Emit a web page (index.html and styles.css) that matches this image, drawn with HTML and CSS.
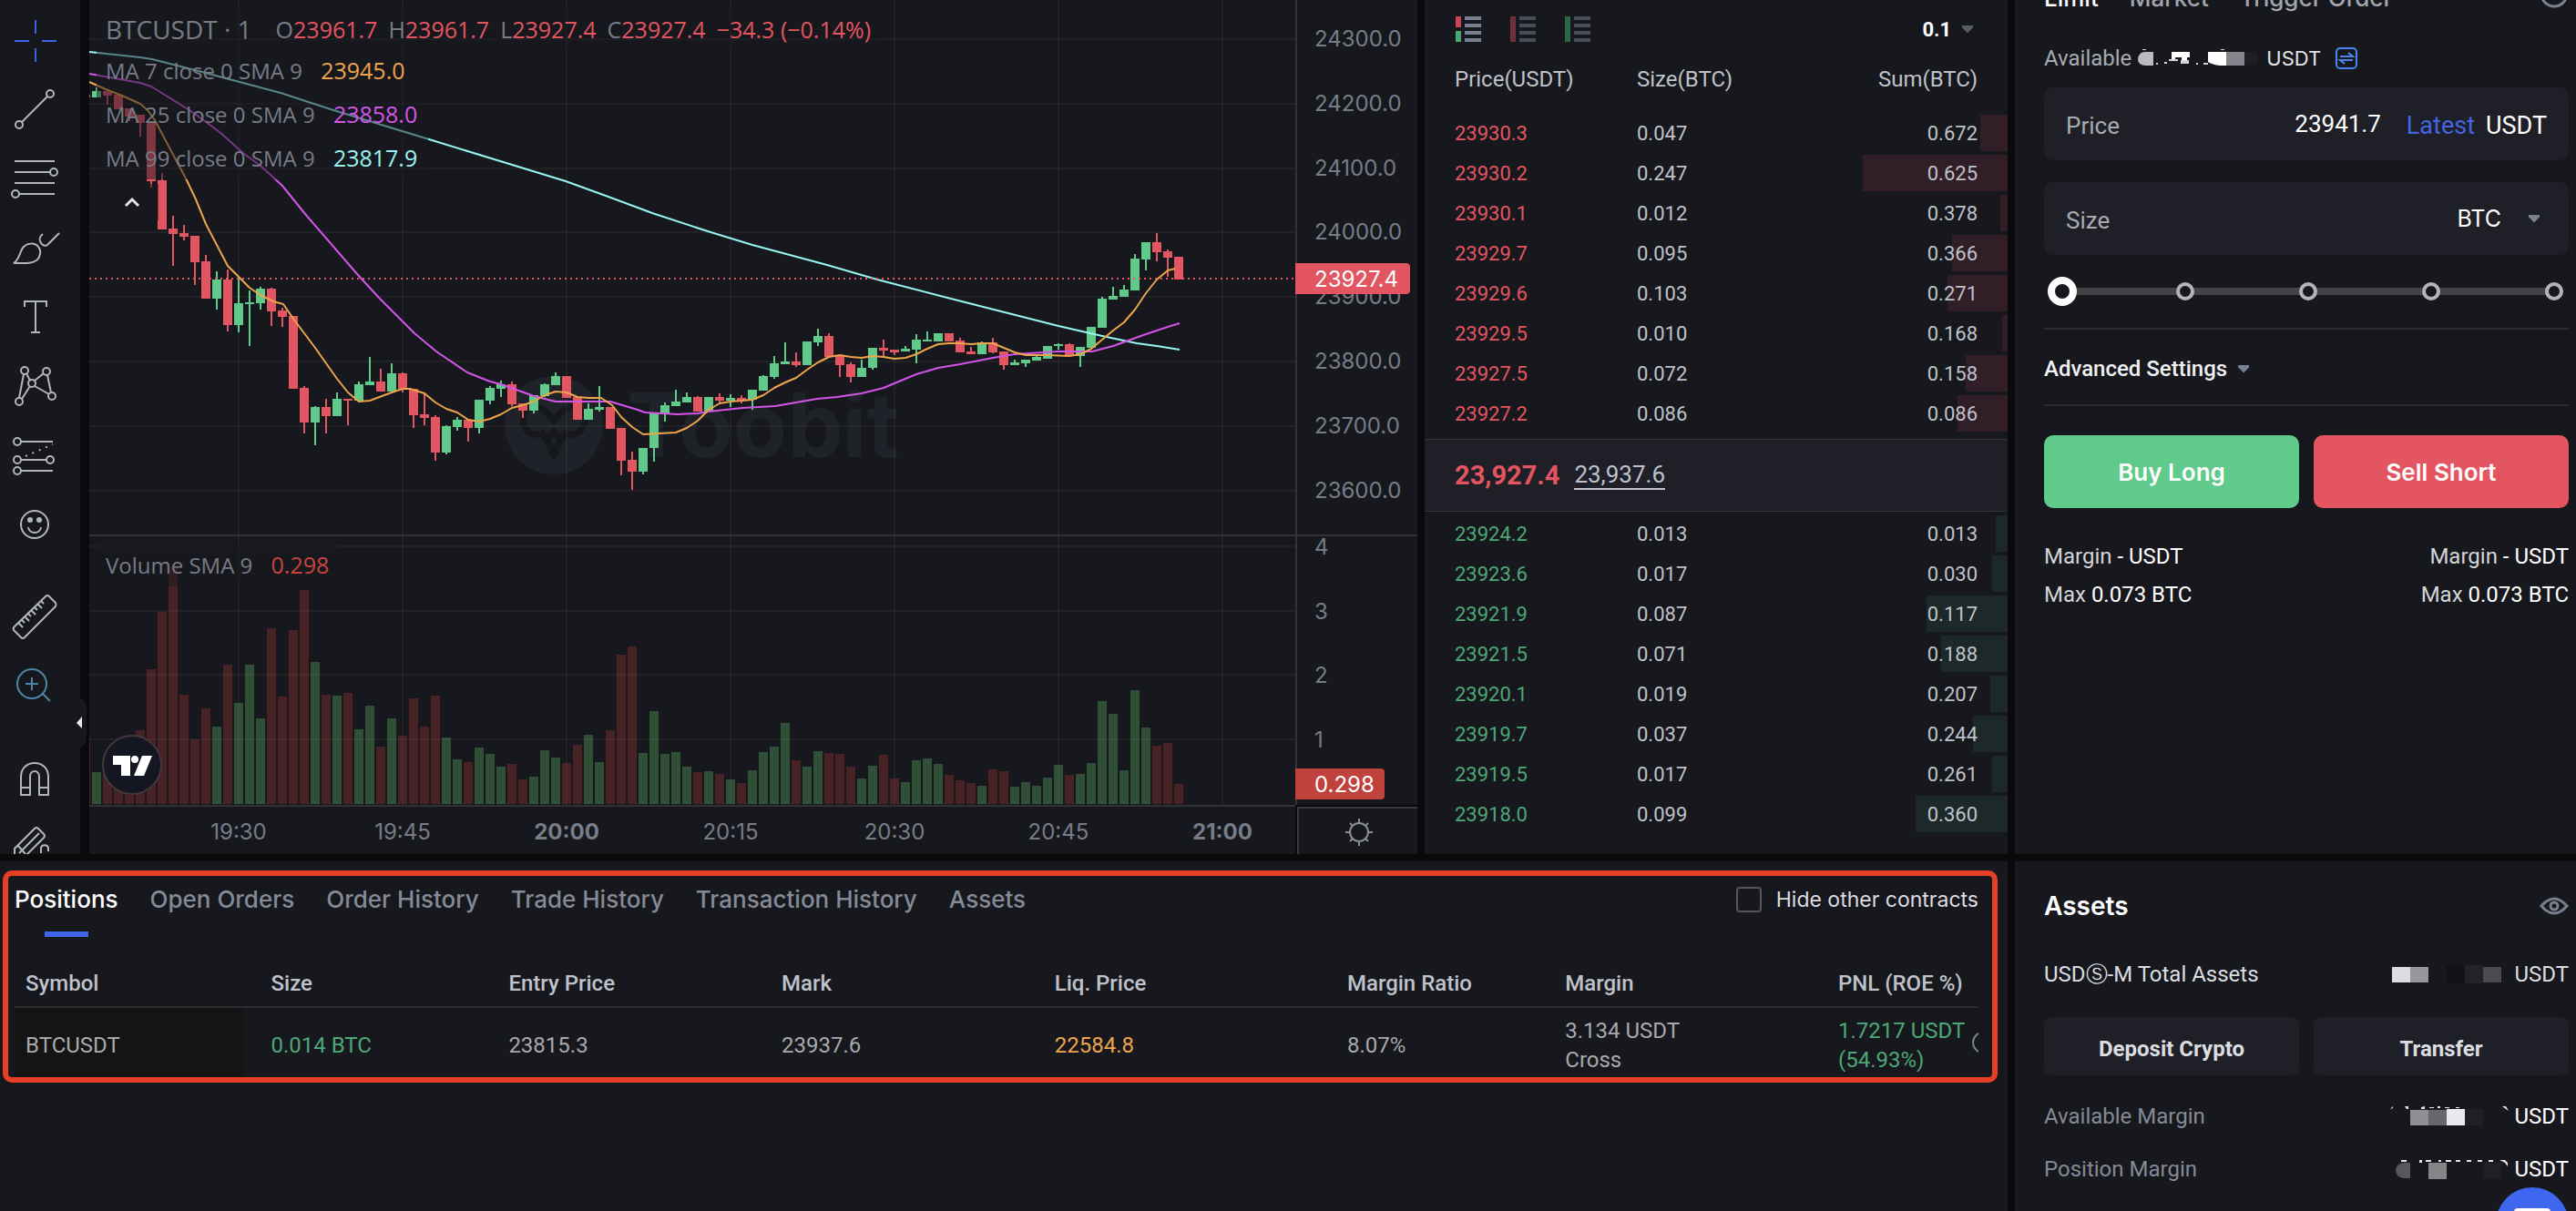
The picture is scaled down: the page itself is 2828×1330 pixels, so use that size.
FILE: index.html
```html
<!DOCTYPE html>
<html lang="en">
<head>
    <meta charset="UTF-8">
    <title>BTCUSDT</title>
    <link rel="stylesheet" href="styles.css">
</head>
<body>
<div class="page">
    <div class="toolbar">
        <div class="tool-group">
            <button class="tool active" aria-label="Cross"><svg viewBox="0 0 56 56"><path d="M23 5v15M23 36v15M0 28h16M30 28h16"/></svg></button>
            <button class="tool" aria-label="Trend line"><svg viewBox="0 0 56 56"><circle cx="39" cy="10" r="4"/><circle cx="5" cy="44" r="4"/><path d="M36 13L8 41"/></svg></button>
            <button class="tool" aria-label="Fib retracement"><svg viewBox="0 0 56 56"><path d="M0 8h44M0 20h39M0 32h44M5 44h39"/><circle cx="43" cy="20" r="4"/><circle cx="1" cy="44" r="4"/></svg></button>
            <button class="tool" aria-label="Brush"><svg viewBox="0 0 56 56"><path d="M-1 44C5 41 6 30 10 26C14 22 22 21 26 26C30 31 28 38 24 41C21 43 18 44 14 44zM31 12C27 15 27 19 29 22C31 25 35 26 37 23L49 11"/></svg></button>
            <button class="tool" aria-label="Text"><svg viewBox="0 0 56 56"><path d="M11 16V10H35V16M23 10V44M18 44H28"/></svg></button>
            <button class="tool" aria-label="Patterns"><svg viewBox="0 0 56 56"><path d="M5 40L10 14M13 13L17 21M22 21L32 13M36 15L40 34M38 36L22 27M17 27L8 41"/><circle cx="11" cy="10" r="4"/><circle cx="35" cy="11" r="4"/><circle cx="19" cy="24" r="4"/><circle cx="41" cy="38" r="4"/><circle cx="5" cy="44" r="4"/></svg></button>
            <button class="tool" aria-label="Forecast"><svg viewBox="0 0 56 56"><path d="M7 12H42M7 32H35M7 44H42"/><path d="M12 28L42 15" stroke-dasharray="2 6"/><circle cx="3" cy="12" r="4"/><circle cx="3" cy="32" r="4"/><circle cx="39" cy="32" r="4"/><circle cx="3" cy="44" r="4"/></svg></button>
            <button class="tool" aria-label="Icons"><svg viewBox="0 0 56 56"><circle cx="22" cy="27" r="15"/><path d="M15 30C16 38 28 38 29 30"/><circle class="dot" cx="17" cy="22" r="2"/><circle class="dot" cx="27" cy="22" r="2"/></svg></button>
        </div>
        <div class="tool-group">
            <button class="tool" aria-label="Measure"><svg viewBox="0 0 56 56"><path d="M34 6Q36 4 38 6L45 13Q46 15 45 17L11 51Q9 53 7 51L-1 43Q-2 41 0 39zM4 35l5 5M11 28l5 5M18 21l5 5M25 14l5 5M8 32l3 3M15 25l3 3M22 18l3 3M29 11l3 3"/></svg></button>
            <button class="tool zoom" aria-label="Zoom in"><svg viewBox="0 0 56 56"><circle cx="19" cy="26" r="16"/><path d="M12 26H26M19 19V33M31 37L39 45"/></svg></button>
        </div>
        <div class="tool-group">
            <button class="tool" aria-label="Magnet"><svg viewBox="0 0 56 56"><path d="M7 48V28C7 8 37 8 37 28V48H27V28C27 20 17 20 17 28V48zM7 40H17M27 40H37"/></svg></button>
            <button class="tool" aria-label="Drawing mode"><svg viewBox="0 0 56 56"><path d="M0 38V31L22 9Q24 7 26 9L32 15Q34 17 32 19L10 41M5 36L27 14M4 28L12 37M29 36V31C29 26 37 26 37 31V34"/></svg></button>
        </div>
    </div>
    <button class="toolbar-toggle" aria-label="Hide toolbar"><svg viewBox="0 0 12 54"><path class="tab" d="M4 0Q11 2 11 10V44Q11 52 4 54z"/><path d="M6 20V33L0 27z" fill="#e8eaee"/></svg></button>

    <div class="chart">
        <svg id="chart" viewBox="0 0 1458 938"></svg>
        <div class="legend">
            <div class="legend-row symbol"><span class="name">BTCUSDT <i>·</i> 1</span>
                <span>O<b>23961.7</b></span><span>H<b>23961.7</b></span><span>L<b>23927.4</b></span><span>C<b>23927.4</b></span><b>−34.3 (−0.14%)</b></div>
            <div class="legend-row">MA 7 close 0 SMA 9 <span class="orange">23945.0</span></div>
            <div class="legend-row">MA 25 close 0 SMA 9 <span class="magenta">23858.0</span></div>
            <div class="legend-row">MA 99 close 0 SMA 9 <span class="cyan">23817.9</span></div>
            <button class="legend-toggle" aria-label="Hide indicators"><svg viewBox="0 0 18 12"><path d="M2 10L9 3L16 10"/></svg></button>
        </div>
        <div class="legend volume">
            <div class="legend-row">Volume SMA 9 <span class="dark-red">0.298</span></div>
        </div>
        <a class="tv" href="#" aria-label="TradingView"><svg viewBox="0 0 66 66"><circle cx="33" cy="33" r="32"/><path d="M12 23H31V45H21V33H12z"/><circle class="mark" cx="36" cy="27" r="4"/><path d="M44 23H55L46 45H35z"/></svg></a>
    </div>

    <div class="book">
        <div class="book-bar">
            <div class="book-modes">
                <button aria-label="Both sides"><svg viewBox="0 0 28 28"><path fill="#c94456" d="M0 0h6v12H0z"/><path fill="#46a873" d="M0 16h6v12H0z"/><path fill="#77818f" d="M10 0h18v4H10zM10 8h18v4H10zM10 16h18v4H10zM10 24h18v4H10z"/></svg></button>
                <button aria-label="Asks"><svg viewBox="0 0 28 28"><path fill="#70303c" d="M0 0h6v28H0z"/><path fill="#474d56" d="M10 0h18v4H10zM10 8h18v4H10zM10 16h18v4H10zM10 24h18v4H10z"/></svg></button>
                <button aria-label="Bids"><svg viewBox="0 0 28 28"><path fill="#2f6649" d="M0 0h6v28H0z"/><path fill="#474d56" d="M10 0h18v4H10zM10 8h18v4H10zM10 16h18v4H10zM10 24h18v4H10z"/></svg></button>
            </div>
            <button class="step">0.1 <span class="caret dim"></span></button>
        </div>
        <table class="asks">
            <thead><tr><th>Price(USDT)</th><th>Size(BTC)</th><th>Sum(BTC)</th></tr></thead>
            <tbody>
            <tr style="--depth: 4.7%"><td>23930.3</td><td>0.047</td><td>0.672</td></tr>
            <tr style="--depth: 24.8%"><td>23930.2</td><td>0.247</td><td>0.625</td></tr>
            <tr style="--depth: 1.2%"><td>23930.1</td><td>0.012</td><td>0.378</td></tr>
            <tr style="--depth: 9.5%"><td>23929.7</td><td>0.095</td><td>0.366</td></tr>
            <tr style="--depth: 10.3%"><td>23929.6</td><td>0.103</td><td>0.271</td></tr>
            <tr style="--depth: 1%"><td>23929.5</td><td>0.010</td><td>0.168</td></tr>
            <tr style="--depth: 7.2%"><td>23927.5</td><td>0.072</td><td>0.158</td></tr>
            <tr style="--depth: 8.6%"><td>23927.2</td><td>0.086</td><td>0.086</td></tr>
            </tbody>
        </table>
        <div class="last"><strong>23,927.4</strong><span>23,937.6</span></div>
        <table class="bids">
            <tbody>
            <tr style="--depth: 2%"><td>23924.2</td><td>0.013</td><td>0.013</td></tr>
            <tr style="--depth: 2.6%"><td>23923.6</td><td>0.017</td><td>0.030</td></tr>
            <tr style="--depth: 13.9%"><td>23921.9</td><td>0.087</td><td>0.117</td></tr>
            <tr style="--depth: 11.4%"><td>23921.5</td><td>0.071</td><td>0.188</td></tr>
            <tr style="--depth: 3%"><td>23920.1</td><td>0.019</td><td>0.207</td></tr>
            <tr style="--depth: 5.9%"><td>23919.7</td><td>0.037</td><td>0.244</td></tr>
            <tr style="--depth: 2.6%"><td>23919.5</td><td>0.017</td><td>0.261</td></tr>
            <tr style="--depth: 15.8%"><td>23918.0</td><td>0.099</td><td>0.360</td></tr>
            </tbody>
        </table>
    </div>

    <div class="order">
        <div class="order-tabs">
            <button class="current">Limit</button>
            <button>Market</button>
            <button>Trigger Order</button>
            <svg class="info" viewBox="0 0 32 32"><circle cx="16" cy="16" r="14"/><path d="M16 16v7M16 9v3"/></svg>
        </div>
        <div class="available">
            <span>Available</span>
            <svg class="mosaic" viewBox="0 0 134 20"><path fill="#bbbbbf" d="M17 3V18H8Q0 17 0 11Q1 3 8 3z"/><path fill="#fff" d="M37 3H57V9H54V12H48V9H41V12H37zM77 3H97V18H90Q82 17 77 14z"/><path fill="#85848c" d="M97 3H117V18H97z"/><path fill="#d5d5d8" d="M20 15h2v2h-2zM29 14h3v2h-3zM34 11h10v2H34zM47 12h9v4h-9zM64 15h2v2h-2zM72 15h5v2h-5zM5 0h4v1H5zM91 0h4v1h-4z"/><path fill="#1f1f25" d="M117 3H130Q134 10 130 16L117 18z"/></svg>
            <span class="unit">USDT</span>
            <button class="swap" aria-label="Transfer"><svg viewBox="0 0 24 24"><rect x="1" y="1" width="22" height="22" rx="4"/><path d="M5 10H19L14 6M19 14H5L10 18"/></svg></button>
        </div>
        <div class="field">
            <label for="price">Price</label>
            <input id="price" type="text" value="23941.7">
            <button class="latest">Latest</button>
            <span class="unit">USDT</span>
        </div>
        <div class="field">
            <label for="size">Size</label>
            <input id="size" type="text" value="">
            <select aria-label="Size unit"><option>BTC</option><option>USDT</option></select>
            <span class="caret"></span>
        </div>
        <div class="slider">
            <div class="marks"><i></i><i></i><i></i><i></i><i></i></div>
            <input type="range" min="0" max="100" value="0" step="1" aria-label="Order size percent">
        </div>
        <button class="advanced">Advanced Settings <span class="caret"></span></button>
        <div class="pair">
            <button class="buy">Buy Long</button>
            <button class="sell">Sell Short</button>
        </div>
        <div class="margins">
            <p>Margin <span>- USDT</span></p><p>Margin <span>- USDT</span></p>
            <p>Max <span>0.073 BTC</span></p><p>Max <span>0.073 BTC</span></p>
        </div>
    </div>

    <div class="positions">
        <div class="frame">
            <div class="frame-head">
                <a class="current" href="#">Positions</a>
                <a href="#">Open Orders</a>
                <a href="#">Order History</a>
                <a href="#">Trade History</a>
                <a href="#">Transaction History</a>
                <a href="#">Assets</a>
                <label class="hide-other"><input type="checkbox"> Hide other contracts</label>
            </div>
            <table>
                <colgroup><col class="c-symbol"><col class="c-size"><col class="c-entry"><col class="c-mark"><col class="c-liq"><col class="c-ratio"><col class="c-margin"><col class="c-pnl"></colgroup>
                <thead>
                <tr><th>Symbol</th><th>Size</th><th>Entry Price</th><th>Mark</th><th>Liq. Price</th><th>Margin Ratio</th><th>Margin</th><th>PNL (ROE %)</th></tr>
                </thead>
                <tbody>
                <tr>
                    <td>BTCUSDT</td>
                    <td class="green">0.014 BTC</td>
                    <td>23815.3</td>
                    <td>23937.6</td>
                    <td class="orange">22584.8</td>
                    <td>8.07%</td>
                    <td>3.134 USDT<br>Cross</td>
                    <td class="green">1.7217 USDT<br>(54.93%)<svg class="share" viewBox="0 0 7 24"><circle cx="12" cy="12" r="11"/></svg></td>
                </tr>
                </tbody>
            </table>
        </div>
    </div>

    <div class="assets">
        <div class="assets-head">
            <h2>Assets</h2>
            <button aria-label="Hide balances"><svg viewBox="0 0 32 20"><path d="M2 10Q9 2 16 2T30 10Q23 18 16 18T2 10z"/><circle cx="16" cy="10" r="4"/></svg></button>
        </div>
        <div class="total">
            <span>USDⓈ-M Total Assets</span>
            <svg class="mosaic" viewBox="0 0 134 20"><path fill="#dcdde2" d="M4 2h20v17H4z"/><path fill="#97979b" d="M24 2h20v17H24z"/><path fill="#131317" d="M63 0h21v20H63z"/><path fill="#232327" d="M84 0h20v20H84z"/><path fill="#4a4a4f" d="M104 2h20v17h-20z"/></svg>
            <span>USDT</span>
        </div>
        <div class="pair">
            <button>Deposit Crypto</button>
            <button>Transfer</button>
        </div>
        <div class="balance">
            <span>Available Margin</span>
            <svg class="mosaic" viewBox="0 0 134 20"><path fill="#909094" d="M24 3h20v17H24z"/><path fill="#68676f" d="M44 3h20v17H44z"/><path fill="#e9eaef" d="M64 2h20v18H64z"/><path fill="#1f1f26" d="M84 2h20v18H84z"/><path fill="#e4e4e7" d="M2 2l3-3v2zM18 -1h4v3h-2zM36 0l4-1v3h-4zM45 0h5v1h-5zM54 -1h3v2h-3zM62 0h5v1h-5zM74 0h4v1h-4zM125 -1h4l3 5-3-2z"/></svg>
            <span class="unit">USDT</span>
        </div>
        <div class="balance">
            <span>Position Margin</span>
            <svg class="mosaic" viewBox="0 0 134 20"><path fill="#57575c" d="M24 3V20H16Q8 18 8 11Q9 4 16 3z"/><path fill="#858588" d="M44 3h20v18H44z"/><path fill="#1f1f26" d="M104 3h20v17h-20z"/><path fill="#e4e4e7" d="M14 0h6v2h-6zM34 0h3v3h-3zM41 0h6v2h-6zM55 0h3v2h-3zM63 0h6v2h-6zM74 0h5v2h-5zM86 0h5v2h-5zM98 0h5v2h-5zM110 0h5v2h-5zM122 0h6l3 3v4l-3-4z"/></svg>
            <span class="unit">USDT</span>
        </div>
    </div>
</div>
<button class="chat" aria-label="Chat"><svg viewBox="0 0 40 34"><rect width="40" height="28" rx="4"/></svg></button>
<script src="chart.js"></script>
</body>
</html>
```

FILE: styles.css
```css
* {
    margin: 0;
    padding: 0;
    box-sizing: border-box;
}

body {
    background: #0a0a0a;
    color: #bfc2ca;
    font-family: Roboto, "Liberation Sans", sans-serif;
    font-size: 24px;
    overflow: hidden;
}

button, input, select {
    font: inherit;
    color: inherit;
    background: none;
    border: none;
    outline: none;
}

button {
    cursor: pointer;
}

a {
    color: inherit;
    text-decoration: none;
}

svg {
    display: block;
    fill: none;
    overflow: visible;
}

table {
    width: 100%;
    border-collapse: collapse;
    table-layout: fixed;
    text-align: left;
}

.page {
    position: relative;
    min-height: 100vh;
    display: grid;
    grid-template-columns: 90px minmax(0, 1fr) 640px 616px;
    grid-template-rows: auto 1fr;
    gap: 8px;
}

.page > div {
    background: #17181d;
}

.green {
    color: #4da777;
}

.orange {
    color: #eda54b;
}

.magenta {
    color: #d354e8;
}

.cyan {
    color: #97f5f2;
}

.dark-red {
    color: #c8453f;
}

.caret {
    display: inline-block;
    width: 12px;
    height: 9px;
    background: #77818f;
    clip-path: polygon(0 0, 100% 0, 100% 30%, 50% 100%, 0 30%);
}

.caret.dim {
    background: #565b65;
}

/* toolbar */
.toolbar {
    height: 0;
    min-height: 100%;
    overflow: hidden;
    padding-top: 7px;
    border-right: 2px solid #0a0a0a;
}

.tool-group {
    margin-bottom: 24px;
}

.tool {
    display: block;
    width: 88px;
    height: 76px;
    padding: 10px 16px;
}

.tool svg {
    width: 56px;
    height: 56px;
    stroke: #b3b6bd;
    stroke-width: 2;
}

.tool .dot {
    fill: #b3b6bd;
}

.tool.active svg {
    stroke: #3f63e6;
}

.tool.zoom svg {
    stroke: #4f86a8;
}

.toolbar-toggle {
    position: absolute;
    left: 84px;
    top: 767px;
    width: 12px;
    height: 54px;
}

.toolbar-toggle .tab {
    fill: #17181d;
}

/* chart */
.chart {
    position: relative;
    font-family: Inter, sans-serif;
}

.chart text {
    font-size: 24px;
    fill: #777c87;
}

.legend {
    position: absolute;
    left: 8px;
    top: 8px;
    color: #777c88;
    font-family: "Open Sans", sans-serif;
}

.legend.volume {
    top: 596px;
}

.legend-row {
    width: fit-content;
    height: 48px;
    line-height: 48px;
    padding: 0 12px 0 10px;
    background: rgba(23, 24, 29, .5);
    white-space: nowrap;
}

.legend-row span {
    margin-left: 14px;
    font-size: 25px;
}

.legend-row b {
    font-weight: normal;
    color: #e35561;
}

.legend-row.symbol {
    display: flex;
    gap: 12px;
    height: 45px;
    font-size: 25px;
}

.symbol span {
    margin: 0;
}

.symbol .name {
    margin-right: 14px;
    font-size: 28px;
}

.symbol i {
    font-style: normal;
}

.legend-toggle {
    width: 58px;
    height: 40px;
    margin: 5px 10px;
    padding: 14px 20px;
    background: rgba(23, 24, 29, .5);
}

.legend-toggle svg {
    width: 18px;
    height: 12px;
    stroke: #e3e4e8;
    stroke-width: 3;
}

.tv {
    position: absolute;
    left: 14px;
    top: 807px;
    width: 66px;
}

.tv svg {
    fill: #fff;
}

.tv circle {
    fill: #141722;
    stroke: #43383e;
    stroke-width: 2;
}

.tv .mark {
    fill: #fff;
    stroke: none;
}

/* order book */
.book {
    font-size: 22px;
    padding-bottom: 22px;
}

.book-bar {
    display: flex;
    justify-content: space-between;
    align-items: center;
    height: 64px;
    padding: 0 38px 0 34px;
}

.book-modes {
    display: flex;
    gap: 32px;
}

.book-modes svg {
    width: 28px;
    height: 28px;
}

.step {
    display: flex;
    align-items: center;
    gap: 12px;
    color: #fff;
    font-weight: bold;
}

.book th {
    height: 60px;
    padding-bottom: 14px;
    font-weight: normal;
    font-size: 24px;
}

.book td {
    height: 44px;
}

.book th:first-child, .book td:first-child {
    width: 233px;
    padding-left: 33px;
}

.book th:last-child, .book td:last-child {
    padding-right: 33px;
    text-align: right;
}

.book tbody tr {
    background-repeat: no-repeat;
    background-position: right center;
    background-size: var(--depth) 40px;
}

.asks tbody tr {
    background-image: linear-gradient(#321e26, #321e26);
}

.bids tbody tr {
    background-image: linear-gradient(#1d2928, #1d2928);
}

.asks td:first-child {
    color: #e35561;
}

.bids td:first-child {
    color: #4da777;
}

.last {
    display: flex;
    align-items: center;
    gap: 16px;
    height: 80px;
    margin: 6px 0 2px;
    padding: 0 33px;
    background: #1f1f27;
    border-top: 1px solid #33343b;
    border-bottom: 1px solid #33343b;
}

.last strong {
    font-size: 29px;
    color: #e35561;
}

.last span {
    font-size: 26px;
    border-bottom: 2px solid #bfc2ca;
}

/* order form */
.order, .assets {
    padding: 0 8px 0 32px;
}

.order {
    overflow: hidden;
}

.order-tabs {
    display: flex;
    gap: 34px;
    height: 32px;
    margin-top: -19px;
    font-family: Inter, sans-serif;
    font-size: 26px;
    font-weight: 500;
    color: #a3a6ae;
}

.order-tabs .current {
    color: #fff;
}

.order-tabs .info {
    width: 32px;
    height: 32px;
    margin: -4px 0 0 auto;
    stroke: #77818f;
    stroke-width: 3;
}

.available {
    display: flex;
    align-items: center;
    height: 32px;
    margin: 35px 0 16px;
    color: #a9abb2;
}

.mosaic {
    width: 134px;
    height: 20px;
    margin: 0 7px;
}

.available .unit {
    color: #e3e4e8;
    font-family: Inter, sans-serif;
    font-size: 22px;
}

.swap {
    margin-left: 16px;
}

.swap svg {
    width: 24px;
    height: 24px;
    stroke: #4c84ee;
    stroke-width: 2;
}

.field {
    display: flex;
    align-items: center;
    height: 80px;
    margin-bottom: 24px;
    padding: 0 24px;
    border-radius: 10px;
    background: #1f1f27;
    font-size: 26px;
    color: #fff;
}

.field label, .field .latest, .field .unit {
    padding-top: 4px;
}

.field label {
    color: #a9abb2;
}

.field input {
    flex: 1;
    min-width: 0;
    text-align: right;
}

.field .latest {
    margin: 0 12px 0 28px;
    color: #4365e0;
}

.field .latest, .field .unit {
    font-size: 27px;
}

.field select {
    appearance: none;
    font-family: Inter, sans-serif;
    font-size: 25px;
    text-align: right;
    text-align-last: right;
}

.field .caret {
    margin: 0 8px 0 30px;
}

.slider {
    position: relative;
    height: 32px;
    padding: 12px 6px;
    background: linear-gradient(#434346, #434346) center / calc(100% - 40px) 8px no-repeat;
}

.marks {
    display: flex;
    justify-content: space-between;
    height: 8px;
    align-items: center;
}

.marks i {
    width: 20px;
    height: 20px;
    border: 4px solid #b3b4b8;
    border-radius: 50%;
    background: #17181d;
}

.marks i:first-child {
    margin-left: 4px;
}

.slider input {
    position: absolute;
    top: 0;
    left: 4px;
    width: calc(100% - 8px);
    height: 32px;
    appearance: none;
}

.slider input::-webkit-slider-thumb {
    appearance: none;
    width: 32px;
    height: 32px;
    border: 8px solid #fff;
    border-radius: 50%;
    background: #17181d;
}

.advanced {
    display: flex;
    align-items: center;
    gap: 12px;
    width: 100%;
    height: 86px;
    margin: 24px 0 32px;
    padding-top: 4px;
    border-top: 2px solid #2c2d32;
    border-bottom: 2px solid #2c2d32;
    color: #f1f1f4;
    font-weight: 500;
}

.pair {
    display: grid;
    grid-template-columns: 1fr 1fr;
    gap: 16px;
}

.pair button {
    height: 64px;
    padding-top: 6px;
    border-radius: 8px;
    background: #1f1f27;
    color: #dcdde0;
    font-weight: bold;
}

.pair .buy, .pair .sell {
    height: 80px;
    padding: 0;
    border-radius: 10px;
    color: #fff;
    font-family: Inter, sans-serif;
    font-size: 26px;
    font-weight: 600;
}

.pair .buy {
    background: #60ca8a;
}

.pair .sell {
    background: #e35561;
}

.margins {
    display: grid;
    grid-template-columns: 1fr 1fr;
    margin-top: 32px;
    line-height: 42px;
    color: #d3d4d8;
}

.margins p:nth-child(even) {
    text-align: right;
}

.margins span {
    color: #fff;
}

/* positions */
.positions {
    grid-column: 1 / 4;
    padding: 10px 11px 0 3px;
}

.frame {
    border: 6px solid #e73f25;
    border-radius: 10px;
    padding: 0 15px 0 7px;
}

.frame-head {
    display: flex;
    gap: 35px;
    height: 67px;
    margin-bottom: 25px;
    line-height: 52px;
    font-family: Inter, sans-serif;
    font-size: 26px;
    font-weight: 500;
    color: #858a96;
}

.frame-head .current {
    color: #fff;
    background: linear-gradient(#3f66ea, #3f66ea) center bottom / 48px 6px no-repeat;
}

.hide-other {
    display: flex;
    align-items: center;
    gap: 16px;
    height: 52px;
    margin-left: auto;
    font-size: 23px;
    font-weight: normal;
    color: #dcdde0;
}

.hide-other input {
    appearance: none;
    width: 28px;
    height: 28px;
    border: 2px solid #55575c;
    border-radius: 4px;
}

.frame th {
    height: 52px;
    padding-left: 12px;
    font-weight: 500;
    color: #bfc2ca;
}

.frame thead tr {
    border-bottom: 2px solid #2c2d32;
}

.frame td {
    position: relative;
    height: 77px;
    padding: 5px 0 0 12px;
    line-height: 32px;
    color: #a9a9ab;
    white-space: nowrap;
}

.frame td.green {
    color: #4da777;
}

.frame td.orange {
    color: #eda54b;
}

.frame td:first-child {
    background: linear-gradient(#141414, #141414) left / 252px 100% no-repeat;
}

.share {
    position: absolute;
    right: 0;
    top: 26px;
    width: 7px;
    height: 24px;
    overflow: hidden;
    stroke: #77818f;
    stroke-width: 2;
}

.c-symbol { width: 12.5%; }
.c-size { width: 12.1%; }
.c-entry { width: 13.9%; }
.c-mark { width: 13.9%; }
.c-liq { width: 14.9%; }
.c-ratio { width: 11.1%; }
.c-margin { width: 13.9%; }
.c-pnl { width: 7.7%; }

/* assets */
.assets {
    padding-top: 28px;
}

.assets-head {
    display: flex;
    justify-content: space-between;
    align-items: center;
    height: 42px;
    margin-bottom: 33px;
}

.assets-head h2 {
    font-family: Inter, sans-serif;
    font-size: 28px;
    font-weight: 600;
    color: #fff;
}

.assets-head svg {
    width: 32px;
    height: 20px;
    stroke: #77818f;
    stroke-width: 3;
}

.total, .balance {
    display: flex;
    align-items: center;
}

.total {
    height: 42px;
    margin-bottom: 26px;
    color: #dcdde0;
}

.assets .pair {
    margin-bottom: 16px;
}

.balance {
    height: 58px;
    color: #858a96;
}

.balance .unit {
    color: #fff;
}

.assets .mosaic {
    margin: 0 4px 0 auto;
}

.chat {
    position: fixed;
    right: 8px;
    bottom: -54px;
    width: 80px;
    height: 80px;
    padding: 23px 20px;
    border-radius: 50%;
    background: #3f66ee;
}

.chat svg {
    fill: #fff;
}
```

FILE: chart.js
```js
// candles: direction, high, body top, body bottom, low, volume top
var candles = [
    ["g",96,100,107,107,848],["r",100,100,105,115,842],["r",104,104,120,120,830],["r",119,119,128,133,825],["r",126,126,135,150,802],
    ["r",133,133,199,206,735],["r",190,198,252,252,672],["r",237,251,257,292,623],["r",247,256,260,264,763],["r",259,259,288,313,812],
    ["r",280,287,328,328,778],["g",298,307,328,340,798],["r",296,307,357,364,730],["g",304,333,357,365,772],["g",319,332,334,380,730],
    ["g",315,317,333,340,789],["r",316,317,342,358,690],["r",338,341,348,359,765],["r",347,347,427,427,692],["r",424,426,464,476,648],
    ["g",446,447,464,489,727],["r",438,447,457,476,763],["g",431,438,457,457,764],["r",438,438,440,467,761],["g",419,422,440,440,801],
    ["g",392,419,423,423,775],["r",405,419,430,430,820],["g",399,410,430,430,789],["r",409,410,428,431,808],["r",427,427,456,470,767],
    ["r",431,455,459,467,798],["r",456,458,497,506,764],["g",467,468,497,499,810],["g",458,461,469,473,834],["r",461,461,470,485,837],
    ["g",439,439,470,476,821],["g",424,426,440,444,828],["g",418,422,427,436,842],["r",419,422,444,446,839],["r",443,443,451,459,856],
    ["g",434,434,451,454,853],["g",421,422,435,436,824],["g",409,413,423,423,832],["r",413,413,437,437,838],["r",436,436,461,461,818],
    ["g",443,449,461,461,807],["g",424,447,450,452,837],["r",447,447,471,471,802],["r",470,470,506,522,719],["r",496,505,518,538,710],
    ["g",492,492,518,521,827],["g",454,454,492,507,781],["g",442,445,455,463,828],["g",428,441,446,446,826],["g",431,436,442,442,842],
    ["r",435,436,452,452,848],["g",436,436,452,453,847],["r",432,436,440,444,850],["g",433,437,440,447,856],["r",434,437,440,443,860],
    ["g",428,428,439,450,846],["g",412,413,429,429,826],["g",391,399,414,416,820],["g",376,397,400,400,794],["r",387,397,401,403,835],
    ["g",375,375,401,401,842],["g",361,369,376,380,825],["r",366,369,392,392,827],["r",390,391,401,414,828],["r",398,400,414,420,842],
    ["g",395,404,414,414,855],["g",382,382,404,406,841],["r",373,382,385,391,829],["r",384,384,387,390,855],["g",380,383,386,386,859],
    ["g",367,373,384,399,835],["g",364,373,375,375,833],["g",366,366,375,375,839],["r",366,366,375,375,851],["r",371,374,387,387,857],
    ["r",381,386,389,389,860],["g",375,376,389,389,863],["r",371,376,387,388,845],["r",386,386,401,406,847],["g",395,398,401,401,864],
    ["g",395,395,399,403,859],["g",391,392,396,396,863],["g",380,380,394,394,854],["g",377,378,380,384,840],["r",377,378,391,391,851],
    ["g",381,381,391,403,850],["g",359,359,382,382,838],["g",326,328,360,360,770],["g",315,325,329,329,784],["g",313,318,326,326,846],
    ["g",279,284,319,319,758],["g",266,266,285,297,799],["r",256,266,277,287,819],["r",274,276,283,304,816],["r",282,282,307,307,861]
];
var ma7 = "0,90 18,98 36,105 56,114 64,121 72,132 107,198 117,219 128,246 152,292 164,304 176,316 188,324 202,331 213,334 224,350 248,382 272,416 284,431 296,441 308,440 332,431 344,427 352,427 368,432 380,442 392,449 404,453 416,461 428,463 440,460 452,455 464,448 476,445 488,441 500,434 512,430 524,431 536,436 548,437 562,437 574,445 584,458 596,469 602,473 608,477 644,475 656,470 668,462 680,450 692,443 704,441 728,439 740,434 752,426 764,420 776,415 788,406 800,398 812,392 824,390 836,392 848,393 860,391 872,392 884,394 896,393 908,389 920,383 932,378 944,377 956,377 968,378 980,377 992,377 1004,382 1016,387 1028,390 1052,390 1076,391 1088,389 1100,383 1112,373 1124,363 1136,354 1148,340 1160,322 1172,307 1184,297 1192,295";
var ma25 = "0,81 56,91 68,95 94,111 116,125 143,145 170,169 188,182 212,204 237,235 295,302 319,328 344,353 357,366 381,386 415,409 440,419 452,422 488,435 512,441 572,441 602,450 610,453 646,455 668,454 680,452 717,448 753,446 799,438 821,436 848,432 872,426 908,411 932,404 956,400 992,393 1016,389 1064,386 1101,386 1124,380 1160,367 1184,359 1197,355";
var ma99 = "0,57 56,63 69,65 116,77 165,90 210,102 268,121 373,153 523,199 567,215 602,228 618,234 679,254 728,269 810,291 865,307 942,327 1064,358 1112,369 1150,377 1172,380 1197,384";

var out = "";

function rect(x, y, w, h, fill) {
    out += '<rect x="' + x + '" y="' + y + '" width="' + w + '" height="' + h + '" fill="' + fill + '"/>';
}

function text(x, y, str, attrs) {
    out += '<text x="' + x + '" y="' + y + '" ' + (attrs || "") + '>' + str + '</text>';
}

// watermark
out += '<circle cx="510" cy="467" r="54" fill="#1f2229"/>';
out += '<path d="M510 462C494 438 476 448 476 461C476 474 489 480 498 476L510 500L522 476C531 480 544 474 544 461C544 448 526 438 510 462zM510 474L518 484L510 494L502 484z" fill="none" stroke="#17181d" stroke-width="7"/>';
text(590, 502, "Toobit", 'style="font-size:97px;font-weight:700;fill:#1f2229"');

// grid
var i;
for (i = 0; i < 7; i++) {
    rect(163 + i * 180, 0, 2, 884, "rgba(255,255,255,.045)");
}
for (i = 0; i < 8; i++) {
    rect(0, Math.round(42 + i * 70.8), 1324, 2, "rgba(255,255,255,.045)");
}
for (i = 0; i < 4; i++) {
    rect(0, Math.round(599 + i * 70.7), 1324, 2, "rgba(255,255,255,.045)");
}

// volume and candles
rect(0, 810, 1, 73, "#472427");
rect(0, 104, 1, 3, "#e35561");
candles.forEach(function (c, n) {
    var x = 3 + n * 12;
    var up = c[0] === "g";
    rect(x, c[5], 10, 883 - c[5], up ? "rgba(80,160,90,.42)" : "rgba(190,60,60,.3)");
});
candles.forEach(function (c, n) {
    var x = 3 + n * 12;
    var color = c[0] === "g" ? "#60ca8a" : "#e35561";
    rect(x + 4, c[1], 2, c[4] - c[1], color);
    rect(x, c[2], 10, Math.max(2, c[3] - c[2]), color);
});

out += '<g fill="none" stroke-width="2" stroke-linejoin="round">';
out += '<polyline points="' + ma99 + '" stroke="#97f5f2"/>';
out += '<polyline points="' + ma25 + '" stroke="#d354e8"/>';
out += '<polyline points="' + ma7 + '" stroke="#eda54b"/>';
out += '<path d="M0 306H1324" stroke="#e35561" stroke-dasharray="2 4"/></g>';

// axes
rect(0, 587, 1458, 2, "#303238");
rect(0, 884, 1325, 2, "#303238");
rect(1324, 0, 2, 884, "#303238");
rect(1324, 884, 134, 2, "#0a0a0a");
rect(1324, 884, 2, 54, "#0a0a0a");
rect(1326, 886, 132, 2, "#393b40");
rect(1326, 886, 2, 52, "#393b40");
for (i = 0; i < 8; i++) {
    text(1345, Math.round(51 + i * 70.8), (24300 - i * 100) + ".0");
}
for (i = 0; i < 4; i++) {
    text(1345, Math.round(609 + i * 70.7), 4 - i);
}
["19:30", "19:45", "20:00", "20:15", "20:30", "20:45", "21:00"].forEach(function (t, n) {
    text(164 + n * 180, 922, t, 'text-anchor="middle"' + (n % 4 === 2 ? ' font-weight="700"' : ''));
});

// value labels
out += '<path d="M1324 289H1445Q1450 289 1450 293V319Q1450 323 1445 323H1324z" fill="#e35561"/>';
text(1345, 315, "23927.4", 'style="fill:#fff"');
out += '<path d="M1324 844H1418Q1422 844 1422 848V874Q1422 878 1418 878H1324z" fill="#c0423d"/>';
text(1345, 870, "0.298", 'style="fill:#fff"');

// settings
out += '<g stroke="#8a8d96" stroke-width="2" fill="none"><circle cx="1394" cy="914" r="10"/>' +
    '<path d="M1394 899v5M1394 924v5M1379 914h5M1404 914h5M1384 904l3 3M1401 921l3 3M1404 904l-3 3M1387 921l-3 3"/></g>';

document.getElementById("chart").innerHTML = out;
```
